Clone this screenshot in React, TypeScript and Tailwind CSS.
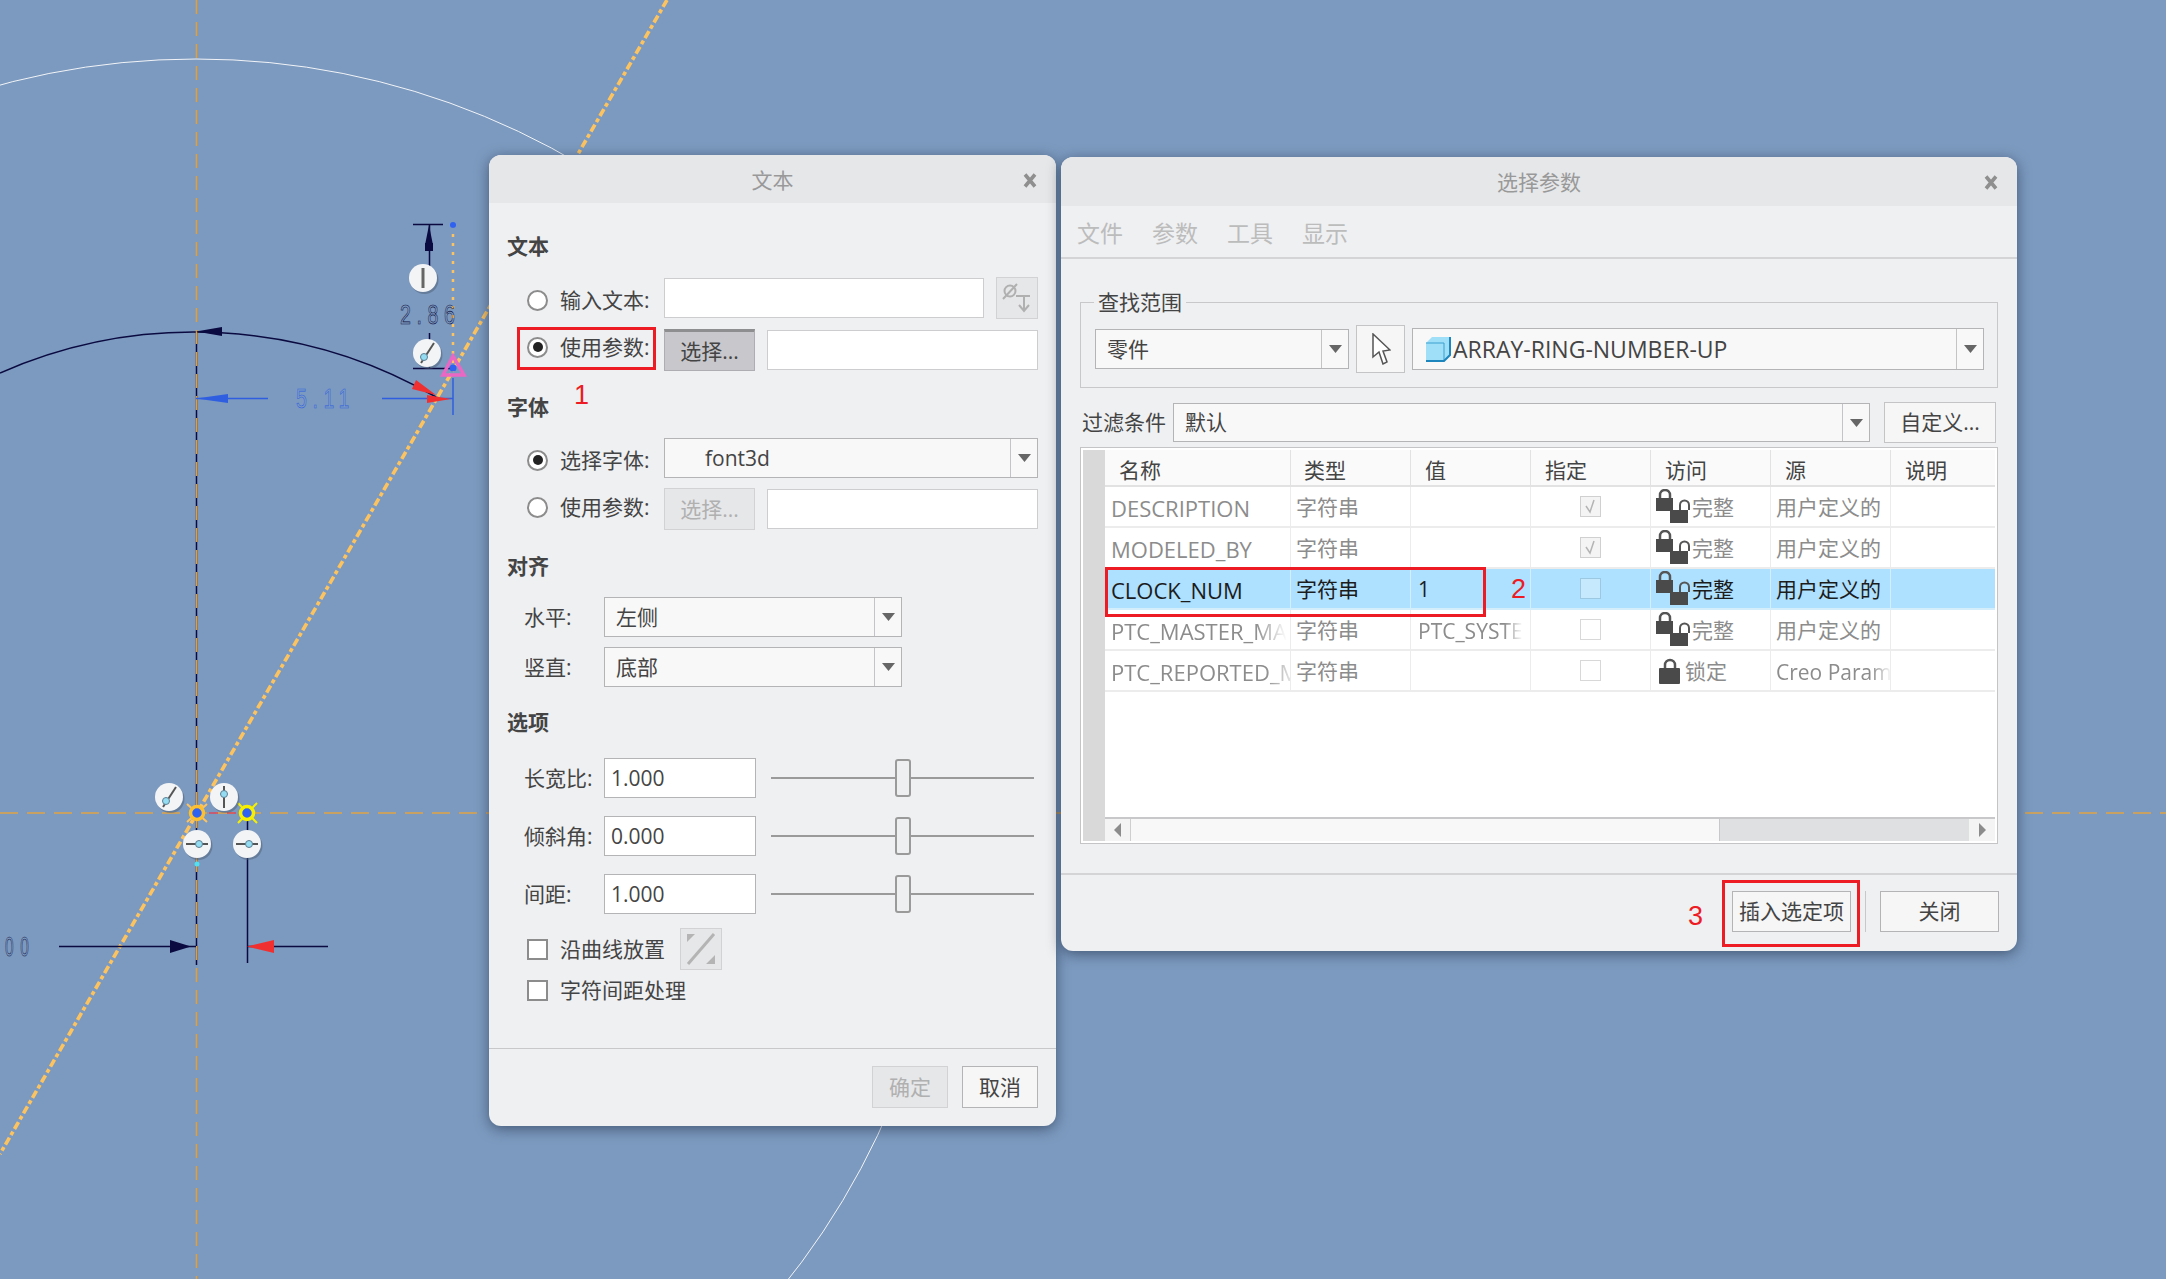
import React from "react";

const Arrow = () => (
  <svg width="13" height="8" viewBox="0 0 13 8">
    <path d="M0 0h13L6.5 8z" fill="#666" />
  </svg>
);

const CloseX = () => (
  <svg width="14" height="15" viewBox="0 0 14 15" className="absolute right-[19px] top-[18px]">
    <path d="M2 1.5L12 13.5M12 1.5L2 13.5" stroke="#8f8f8f" strokeWidth="3.6" />
  </svg>
);

const Combo = ({ text, className, arrowW = "w-[27px]", children }: { text: string; className: string; arrowW?: string; children?: React.ReactNode }) => (
  <div className={`flex items-stretch bg-[#f8f8f8] border border-[#b4b4b6] ${className}`}>
    <div className="flex-1 flex items-center overflow-hidden whitespace-nowrap">
      {children}
      {text}
    </div>
    <div className={`${arrowW} flex items-center justify-center border-l border-[#c4c4c6]`}>
      <Arrow />
    </div>
  </div>
);

const Radio = ({ on }: { on?: boolean }) => (
  <div className="w-[21px] h-[21px] rounded-full bg-white border-2 border-[#8c8c8c] flex items-center justify-center shrink-0">
    {on && <div className="w-[10px] h-[10px] rounded-full bg-[#222]" />}
  </div>
);

const Check = () => <div className="w-[21px] h-[21px] bg-white border-2 border-[#8c8c8c] shrink-0" />;

const Heading = ({ children, className }: { children: string; className: string }) => (
  <div className={`h-[30px] leading-[28px] font-bold text-[#444] ${className}`}>{children}</div>
);

const Field = ({ className }: { className: string }) => (
  <div className={`bg-white border border-[#cdcdd0] ${className}`} />
);

const RadioRow = ({ on, label, className }: { on?: boolean; label: string; className: string }) => (
  <div className={`w-[157px] pl-[20px] flex items-center gap-[12px] shrink-0 ${className}`}>
    <Radio on={on} />
    <span className="whitespace-nowrap">{label}</span>
  </div>
);

const SliderRow = ({ label, value, className }: { label: string; value: string; className: string }) => (
  <div className={`flex items-center h-[40px] ${className}`}>
    <div className="w-[97px] pl-[17px] shrink-0 whitespace-nowrap">{label}</div>
    <div className="w-[152px] h-[40px] bg-white border border-[#b4b4b6] flex items-center pl-[6px]">{value}</div>
    <div className="relative ml-[15px] w-[263px] h-[38px] flex items-center">
      <div className="w-full h-[2px] bg-[#9a9a9a]" />
      <div className="absolute left-[124px] top-0 w-[16px] h-[38px] rounded-[3px] bg-[#eeeff1] border-2 border-[#9a9a9a]" />
    </div>
  </div>
);

const LockPair = () => (
  <svg width="36" height="36" viewBox="0 0 36 36" className="shrink-0">
    <path d="M4 10V6a5 5 0 0 1 10 0v4" fill="none" stroke="#555" strokeWidth="2.5" />
    <rect x="0" y="9" width="17" height="13" fill="#4a4a4a" />
    <path d="M24 21v-5a4 4 0 0 1 9 0v5" fill="none" stroke="#555" strokeWidth="2" />
    <rect x="14" y="21" width="18" height="13" fill="#4a4a4a" />
  </svg>
);

const Lock = () => (
  <svg width="22" height="26" viewBox="0 0 22 26" className="shrink-0">
    <path d="M6 11V7a5 5 0 0 1 10 0v4" fill="none" stroke="#555" strokeWidth="2.5" />
    <rect x="0" y="10" width="21" height="16" rx="1" fill="#4a4a4a" />
  </svg>
);

const TICK = (
  <svg width="21" height="21" viewBox="0 0 21 21">
    <rect x="0.5" y="0.5" width="20" height="20" fill="#f4f4f4" stroke="#d0d0d0" />
    <path d="M6 10l4 6 4-12" fill="none" stroke="#b4b4b4" strokeWidth="1.5" />
  </svg>
);

const rows = [
  { name: "DESCRIPTION", val: "", tick: true, lock: "完整", src: "用户定义的" },
  { name: "MODELED_BY", val: "", tick: true, lock: "完整", src: "用户定义的" },
  { name: "CLOCK_NUM", val: "1", tick: false, lock: "完整", src: "用户定义的", sel: true },
  { name: "PTC_MASTER_MA", val: "PTC_SYSTE", tick: false, lock: "完整", src: "用户定义的", fade: true },
  { name: "PTC_REPORTED_M", val: "", tick: false, lock: "锁定", src: "Creo Param", fade: true, fadeSrc: true },
];

const headers = [
  { t: "名称", w: "w-[186px] pl-[14px]" },
  { t: "类型", w: "w-[120px] pl-[13px]" },
  { t: "值", w: "w-[120px] pl-[14px]" },
  { t: "指定", w: "w-[120px] pl-[14px]" },
  { t: "访问", w: "w-[120px] pl-[14px]" },
  { t: "源", w: "w-[120px] pl-[14px]" },
  { t: "说明", w: "w-[105px] pl-[14px]" },
];

const fadeCls = "leading-[30px] [mask-image:linear-gradient(to_right,black_82%,transparent)]";

const ParamTable = () => (
  <div className="mx-[19px] mt-[4px] h-[397px] border border-[#c4c4c6] bg-white p-[2px] flex">
    <div className="w-[22px] bg-[#d9d9d9] shrink-0" />
    <div className="flex-1 flex flex-col min-w-0">
      <div className="flex h-[37px] bg-[#fafafa] border-b-2 border-[#e2e2e2] text-[#444]">
        {headers.map((h) => (
          <div key={h.t} className={`${h.w} flex items-center pt-[5px] border-r border-[#e2e2e2] last:border-r-0 shrink-0`}>
            {h.t}
          </div>
        ))}
      </div>
      {rows.map((r) => {
        const tone = r.sel ? "text-[#1c1c1c] bg-[#aee0ff]" : "text-[#8c8c8c]";
        const line = r.sel ? "border-[#d5eefc]" : "border-[#ececec]";
        return (
          <div key={r.name} className={`flex h-[41px] border-b-2 ${line} ${tone}`}>
            <div className={`w-[186px] pl-[6px] pt-[2px] flex items-center border-r text-[22px] ${line} overflow-hidden whitespace-nowrap`}>
              <span className={r.fade ? fadeCls : ""}>{r.name}</span>
            </div>
            <div className={`w-[120px] pl-[5px] pt-[2px] flex items-center border-r ${line}`}>字符串</div>
            <div className={`w-[120px] pl-[7px] pt-[2px] flex items-center border-r ${line} overflow-hidden whitespace-nowrap`}>
              <span className={r.fade ? fadeCls : ""}>{r.val}</span>
            </div>
            <div className={`w-[120px] flex items-center justify-center border-r ${line}`}>
              {r.tick ? (
                TICK
              ) : (
                <div className={`w-[21px] h-[21px] border ${r.sel ? "bg-[#c6e9fd] border-[#9cc8e2]" : "bg-white border-[#d8d8d8]"}`} />
              )}
            </div>
            <div className={`w-[120px] flex items-center border-r ${line} ${r.lock === "锁定" ? "pl-[8px] gap-[4px]" : "pl-[5px]"}`}>
              {r.lock === "锁定" ? <Lock /> : <LockPair />}
              <span className="pt-[2px]">{r.lock}</span>
            </div>
            <div className={`w-[120px] pl-[5px] pt-[2px] flex items-center border-r ${line} overflow-hidden whitespace-nowrap`}>
              <span className={r.fadeSrc ? fadeCls : ""}>{r.src}</span>
            </div>
            <div className="flex-1" />
          </div>
        );
      })}
      <div className="flex-1" />
      <div className="h-[24px] flex bg-[#dfe0e2] border-t-2 border-[#c8c8ca]">
        <div className="w-[26px] bg-[#f4f4f4] flex items-center justify-center border-r border-[#cfcfcf]">
          <svg width="7" height="14" viewBox="0 0 7 14"><path d="M7 0v14L0 7z" fill="#8c8c8c" /></svg>
        </div>
        <div className="w-[589px] bg-[#f8f8f8] border-r border-[#c8c8ca]" />
        <div className="flex-1" />
        <div className="w-[26px] bg-[#f4f4f4] flex items-center justify-center">
          <svg width="7" height="14" viewBox="0 0 7 14"><path d="M0 0v14l7-7z" fill="#8c8c8c" /></svg>
        </div>
      </div>
    </div>
  </div>
);

const Handle = ({ x, y, kind }: { x: number; y: number; kind: "v" | "h" | "d" | "bar" }) => (
  <g>
    <circle cx={x + 1.5} cy={y + 2} r="14" fill="#4d5f78" opacity="0.5" />
    <circle cx={x} cy={y} r="14" fill="#f3f4f6" />
    {kind === "h" && <path d={`M${x - 11} ${y}h22`} stroke="#555" strokeWidth="2" />}
    {kind === "v" && <path d={`M${x} ${y - 11}v22`} stroke="#555" strokeWidth="2" />}
    {kind === "bar" && <path d={`M${x} ${y - 10}v20`} stroke="#666" strokeWidth="3" />}
    {kind === "d" && <path d={`M${x - 6} ${y + 10}L${x + 7} ${y - 10}`} stroke="#555" strokeWidth="2" />}
    {kind !== "bar" && (
      <circle
        cx={kind === "h" ? x + 2 : kind === "d" ? x - 3 : x}
        cy={kind === "d" ? y + 4 : kind === "v" ? y - 3 : y}
        r="3.5"
        fill="#93dcf2"
        stroke="#5e7f93"
      />
    )}
  </g>
);

const CadDrawing = () => (
  <svg className="absolute inset-0" width="2166" height="1279" viewBox="0 0 2166 1279" fill="none">
    {/* sketch circles */}
    <circle cx="196" cy="813" r="754" stroke="#f2f4f8" strokeWidth="1" />
    <path d="M0 373A482 482 0 0 1 436 397" stroke="#0a0a40" strokeWidth="1.5" />
    {/* centre lines */}
    <path d="M196.5 331V965" stroke="#0a0a40" strokeWidth="1.5" />
    <path d="M0 813H2166" stroke="#dfa245" strokeWidth="1.5" strokeDasharray="18 9" />
    <path d="M196.5 0V1279" stroke="#e89e2e" strokeWidth="1.5" strokeDasharray="14 8" />
    <path d="M667 0L0 1154" stroke="#fdc35f" strokeWidth="3.6" strokeDasharray="8 3 4 3" />
    <path d="M453 225V368" stroke="#fdc35f" strokeWidth="2.5" strokeDasharray="3 6" />
    {/* 2.86 dimension */}
    <path d="M413 224.5H443M413 368.5H453M429.5 225V278M429.5 333V368" stroke="#0a0a40" strokeWidth="1.5" />
    <path d="M429 225L433 245H425zM425 243H433V251H425z" fill="#0a0a40" />
    <text transform="translate(400 324) scale(0.7 1)" fontFamily="Liberation Sans" fontSize="28" letterSpacing="8" fill="none" stroke="#0a0a40" strokeWidth="0.6">2.86</text>
    {/* 5.11 dimension */}
    <path d="M196 398.5H268M382 398.5H453M453 378V415" stroke="#2f5fe0" strokeWidth="1.5" />
    <path d="M196 398.5L228 394V403z" fill="#2f5fe0" />
    <text transform="translate(296 408) scale(0.7 1)" fontFamily="Liberation Sans" fontSize="28" letterSpacing="8" fill="none" stroke="#2f5fe0" strokeWidth="0.6">5.11</text>
    <path d="M196 331.5L222 327V336z" fill="#0a0a40" />
    <path d="M436 395L416 380L412 389zM451 399L427 395V403z" fill="#f03030" />
    <path d="M453 356L443 375H464z" stroke="#ea68c4" strokeWidth="3.5" />
    <circle cx="453" cy="225" r="3" fill="#2f62f0" />
    <circle cx="453" cy="368" r="3.5" fill="#2f62f0" />
    {/* lower dimension */}
    <path d="M59 946.5H196M247 946.5H328M247.5 813V963" stroke="#0a0a40" strokeWidth="1.5" />
    <path d="M191 946.5L170 940V953z" fill="#0a0a40" />
    <path d="M247 946.5L274 940V953z" fill="#f03030" />
    <text transform="translate(5 956) scale(0.55 1)" fontFamily="Liberation Sans" fontSize="28" letterSpacing="12" fill="none" stroke="#0a0a40" strokeWidth="0.6">00</text>
    <path d="M209 813H236" stroke="#d84a60" strokeWidth="1.5" strokeDasharray="9 9" />
    <path d="M187 804l20 18M207 804l-20 18" stroke="#fdc35f" strokeWidth="2" />
    <circle cx="197" cy="813" r="6.5" fill="#2f62f0" stroke="#fdc030" strokeWidth="3.5" />
    <path d="M238 803l19 20M257 803l-19 20" stroke="#f6f000" strokeWidth="2" />
    <circle cx="247" cy="813" r="6.5" fill="#2f62f0" stroke="#f6f000" strokeWidth="3.5" />
    <circle cx="197" cy="864" r="2.5" fill="#50e0f0" />
    <Handle x={423} y={278} kind="bar" />
    <Handle x={427} y={353} kind="d" />
    <Handle x={169} y={797} kind="d" />
    <Handle x={224} y={797} kind="v" />
    <Handle x={197} y={844} kind="h" />
    <Handle x={247} y={844} kind="h" />
  </svg>
);

const TextDialog = () => (
  <div className="absolute left-[489px] top-[155px] w-[567px] h-[971px] rounded-[12px] overflow-hidden bg-[#eff0f2] shadow-[0_3px_14px_rgba(30,45,70,0.6)] flex flex-col">
    <div className="h-[48px] bg-[#e6e7e9] relative flex items-center justify-center pt-[2px] text-[#999] shrink-0">
      文本
      <CloseX />
    </div>
    <div className="flex-1 px-[18px] flex flex-col">
      <Heading className="mt-[29px]">文本</Heading>
      <div className="mt-[15px] flex items-center h-[42px]">
        <RadioRow label="输入文本:" className="pt-[4px]" />
        <Field className="w-[320px] h-[40px]" />
        <div className="ml-[12px] w-[42px] h-[42px] bg-[#e6e7e9] border border-[#d2d2d4] flex items-center justify-center">
          <svg width="30" height="32" viewBox="0 0 30 32" fill="none" stroke="#b0b0b0" strokeWidth="2">
            <circle cx="8" cy="9" r="5.5" />
            <path d="M1 17L15 2M14 14H28M22 14V29M17 23l5 6 5-6" />
          </svg>
        </div>
      </div>
      <div className="mt-[10px] flex items-center h-[42px]">
        <RadioRow on label="使用参数:" className="pb-[6px]" />
        <div className="w-[91px] h-[42px] bg-[#c8c8cc] border border-[#aeaeb2] border-t-[3px] border-t-[#8e8e90] flex items-center justify-center">选择...</div>
        <Field className="ml-[12px] w-[271px] h-[40px]" />
      </div>
      <Heading className="mt-[22px]">字体</Heading>
      <div className="mt-[15px] flex items-center h-[40px]">
        <RadioRow on label="选择字体:" className="pt-[4px]" />
        <Combo text="font3d" className="w-[374px] h-[40px] pl-[40px]" />
      </div>
      <div className="mt-[10px] flex items-center h-[42px]">
        <RadioRow label="使用参数:" className="pb-[4px]" />
        <div className="w-[91px] h-[42px] bg-[#e6e7e9] border border-[#d2d2d4] text-[#b0b0b0] flex items-center justify-center">选择...</div>
        <Field className="ml-[12px] w-[271px] h-[40px]" />
      </div>
      <Heading className="mt-[22px]">对齐</Heading>
      <div className="mt-[15px] flex items-center h-[40px]">
        <div className="w-[97px] pl-[17px] shrink-0">水平:</div>
        <Combo text="左侧" className="w-[298px] h-[40px] pl-[11px]" />
      </div>
      <div className="mt-[10px] flex items-center h-[40px]">
        <div className="w-[97px] pl-[17px] shrink-0">竖直:</div>
        <Combo text="底部" className="w-[298px] h-[40px] pl-[11px]" />
      </div>
      <Heading className="mt-[21px]">选项</Heading>
      <SliderRow label="长宽比:" value="1.000" className="mt-[20px]" />
      <SliderRow label="倾斜角:" value="0.000" className="mt-[18px]" />
      <SliderRow label="间距:" value="1.000" className="mt-[18px]" />
      <div className="mt-[14px] h-[42px] pl-[20px] flex items-center">
        <Check />
        <span className="ml-[12px]">沿曲线放置</span>
        <div className="ml-[15px] w-[42px] h-[42px] bg-[#e6e7e9] border border-[#d2d2d4] flex items-center justify-center">
          <svg width="32" height="34" viewBox="0 0 32 34" fill="none">
            <path d="M3 32L29 2" stroke="#b4b4b4" strokeWidth="3" />
            <path d="M2 2h8l-8 8zM30 32h-9l9-9z" fill="#b4b4b4" />
          </svg>
        </div>
      </div>
      <div className="mt-[9px] h-[22px] pl-[20px] flex items-center">
        <Check />
        <span className="ml-[12px]">字符间距处理</span>
      </div>
    </div>
    <div className="h-[78px] border-t border-[#c8c8cb] flex justify-end items-start pt-[17px] pr-[18px] gap-[14px] shrink-0">
      <div className="w-[76px] h-[42px] bg-[#e6e7e9] border border-[#d2d2d4] text-[#b0b0b0] flex items-center justify-center">确定</div>
      <div className="w-[76px] h-[42px] bg-[#f6f6f6] border border-[#b4b4b6] flex items-center justify-center">取消</div>
    </div>
  </div>
);

const ParamDialog = () => (
  <div className="absolute left-[1061px] top-[157px] w-[956px] h-[794px] rounded-[12px] overflow-hidden bg-[#eff0f2] shadow-[0_3px_14px_rgba(30,45,70,0.6)] flex flex-col">
    <div className="h-[49px] bg-[#e6e7e9] relative flex items-center justify-center pt-[2px] text-[#999] shrink-0">
      选择参数
      <CloseX />
    </div>
    <div className="h-[53px] border-b-2 border-[#d4d4d6] pl-[16px] pt-[3px] flex items-center gap-[29px] text-[23px] text-[#bcbcbc] shrink-0">
      <span>文件</span>
      <span>参数</span>
      <span>工具</span>
      <span>显示</span>
    </div>
    <div className="relative mx-[19px] mt-[43px] h-[86px] border border-[#c8c8cb] pt-[8px] pl-[14px] flex items-center gap-[7px] shrink-0">
      <span className="absolute left-[13px] -top-[16px] h-[30px] leading-[30px] px-[4px] bg-[#eff0f2]">查找范围</span>
      <Combo text="零件" className="w-[254px] h-[40px] pl-[11px]" />
      <div className="w-[49px] h-[48px] bg-[#f6f6f6] border border-[#c4c4c6] flex items-center justify-center">
        <svg width="20" height="32" viewBox="0 0 20 32" fill="#fff" stroke="#555" strokeWidth="1.5">
          <path d="M2 1V24L8 19L12 31L16 29L12 18L19 17Z" />
        </svg>
      </div>
      <Combo text="ARRAY-RING-NUMBER-UP" className="w-[572px] h-[42px] pl-[12px] text-[23px]">
        <svg width="26" height="26" viewBox="0 0 26 26" className="mr-[2px] shrink-0">
          <path d="M1 7L7 1H25V19L19 25H1z" fill="#9fe0f8" />
          <path d="M1 7H19V25" fill="none" stroke="#3a9fd0" strokeWidth="1" />
          <path d="M1 25H19L25 19V1" fill="none" stroke="#1f86bd" strokeWidth="2" />
        </svg>
      </Combo>
    </div>
    <div className="mt-[14px] pl-[21px] flex items-center h-[41px] shrink-0">
      <span className="w-[91px] whitespace-nowrap">过滤条件</span>
      <Combo text="默认" className="w-[697px] h-[39px] pl-[11px]" />
      <div className="ml-[14px] w-[112px] h-[41px] bg-[#f6f6f6] border border-[#c4c4c6] flex items-center justify-center">自定义...</div>
    </div>
    <ParamTable />
    <div className="mt-[29px] flex-1 border-t-2 border-[#d4d4d6] flex justify-end items-start pt-[16px] pr-[18px] relative">
      <div className="w-[119px] h-[41px] bg-[#f6f6f6] border border-[#b4b4b6] flex items-center justify-center whitespace-nowrap">插入选定项</div>
      <div className="ml-[14px] w-px h-[41px] bg-[#c8c8cb]" />
      <div className="ml-[14px] w-[119px] h-[41px] bg-[#f6f6f6] border border-[#b4b4b6] flex items-center justify-center">关闭</div>
    </div>
  </div>
);

export default function App() {
  return (
    <div className="relative w-[2166px] h-[1279px] overflow-hidden bg-[#7c9abf] text-[21px] leading-none text-[#444] font-['Open_Sans','Noto_Sans_CJK_SC',sans-serif]">
      <CadDrawing />
      <TextDialog />
      <ParamDialog />
      {/* red call-outs drawn over the dialogs */}
      <div className="absolute left-[517px] top-[327px] w-[139px] h-[43px] border-[3px] border-[#ed1c24]" />
      <div className="absolute left-[1105px] top-[567px] w-[381px] h-[50px] border-[3px] border-[#ed1c24]" />
      <div className="absolute left-[1722px] top-[880px] w-[138px] h-[67px] border-[3px] border-[#ed1c24]" />
      <span className="absolute left-[574px] top-[382px] text-[27px] text-[#ed1c24] font-['Liberation_Sans',sans-serif]">1</span>
      <span className="absolute left-[1511px] top-[576px] text-[27px] text-[#ed1c24] font-['Liberation_Sans',sans-serif]">2</span>
      <span className="absolute left-[1688px] top-[903px] text-[27px] text-[#ed1c24] font-['Liberation_Sans',sans-serif]">3</span>
    </div>
  );
}
